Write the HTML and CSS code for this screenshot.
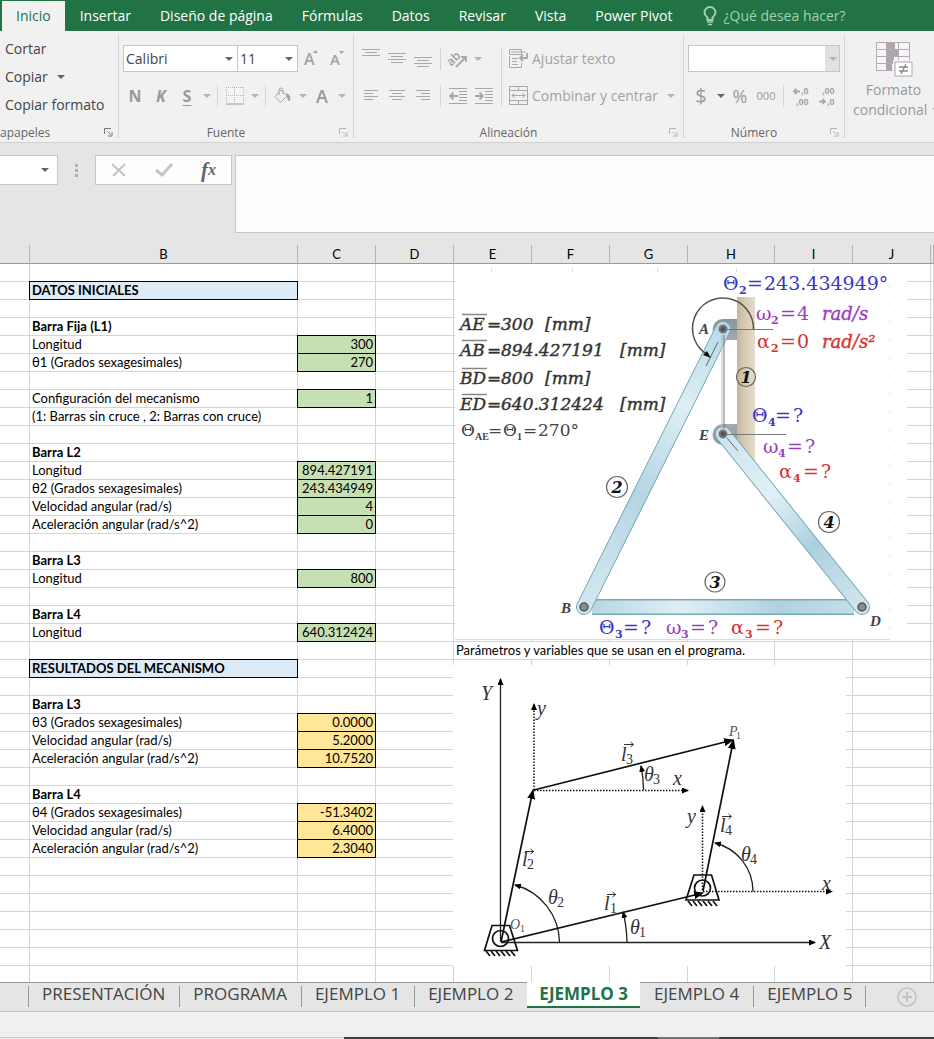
FILE: index.html
```html
<!DOCTYPE html>
<html lang="es">
<head>
<meta charset="utf-8">
<title>Mecanismo de cuatro barras</title>
<link rel="stylesheet" href="styles.css">
</head>
<body>
<nav class="menu" aria-label="Cinta">
  <button class="menu-tab menu-tab-active">Inicio</button>
  <button class="menu-tab">Insertar</button>
  <button class="menu-tab">Diseño de página</button>
  <button class="menu-tab">Fórmulas</button>
  <button class="menu-tab">Datos</button>
  <button class="menu-tab">Revisar</button>
  <button class="menu-tab">Vista</button>
  <button class="menu-tab">Power Pivot</button>
  <button class="menu-tab menu-help">
    <svg width="14" height="20" viewBox="0 0 14 20" fill="none" stroke="#a3cfb3" stroke-width="2"><path d="M4.500 14v-2.500C2.500 9.800 1.500 8.300 1.500 6.500a5.500 5.500 0 0 1 11 0c0 1.800-1 3.300-3 5V14z"/><path d="M4 16h6M5 18.500h4" stroke-width="1.500"/></svg>
    ¿Qué desea hacer?
  </button>
</nav>

<section class="ribbon">
  <div class="group group-clipboard">
    <div class="stack">
      <button class="text-btn">Cortar</button>
      <button class="text-btn">Copiar <i class="caret"></i></button>
      <button class="text-btn">Copiar formato</button>
    </div>
    <div class="group-title group-title-start">apapeles
      <svg class="launcher launcher-on" width="9" height="9" viewBox="0 0 9 9"><path d="M.5 6V.5H7M3.500 3.500l3 3M8 4v4H4" /></svg>
    </div>
  </div>
  <span class="divider"></span>

  <div class="group group-font">
    <div class="group-body">
      <div class="row">
        <label class="combo combo-font"><select aria-label="Fuente"><option>Calibri</option></select></label>
        <label class="combo combo-size"><select aria-label="Tamaño"><option>11</option></select></label>
        <button class="btn" aria-label="Aumentar tamaño"><svg width="18" height="24" viewBox="0 0 18 24"><text x="2" y="18" class="ico-letter ico-a">A</text><path d="M11 6l2.500-3L16 6z" class="ico-fill"/></svg></button>
        <button class="btn" aria-label="Reducir tamaño"><svg width="18" height="24" viewBox="0 0 18 24"><text x="2" y="18" class="ico-letter ico-a-small">A</text><path d="M11 4l2.500 3L16 4z" class="ico-fill"/></svg></button>
      </div>
      <div class="row">
        <button class="btn letter">N</button>
        <button class="btn letter letter-italic">K</button>
        <button class="btn letter letter-underline">S</button>
        <button class="drop" aria-label="Subrayado"><i class="caret caret-off"></i></button>
        <span class="vsep"></span>
        <button class="btn" aria-label="Bordes"><svg width="18" height="18" viewBox="0 0 18 18"><rect width="18" height="17" fill="#f8f2f9"/><path d="M.5 0v16M17.500 0v16M8.500 0v16M0 .5h18M0 8.500h18" fill="none" stroke="#bda9c2" stroke-dasharray="1 1"/><path d="M0 17h18" stroke="#999"/></svg></button>
        <button class="drop" aria-label="Más bordes"><i class="caret caret-off"></i></button>
        <span class="vsep"></span>
        <button class="btn" aria-label="Relleno"><svg width="18" height="18" viewBox="0 0 18 18"><path d="M7 3l6 6-6.500 6.500-5.500-6z" class="ico-line" fill="#f8f6f8"/><path d="M5 8V3a2 2 0 0 1 4 0v4" class="ico-line"/><path d="M12 6c4 1 5 4 4 8-2 0-3-2-3-5z" class="ico-fill"/></svg></button>
        <button class="drop" aria-label="Color de relleno"><i class="caret caret-off"></i></button>
        <button class="btn letter letter-color">A</button>
        <button class="drop" aria-label="Color de fuente"><i class="caret caret-off"></i></button>
      </div>
    </div>
    <div class="group-title">Fuente
      <svg class="launcher" width="9" height="9" viewBox="0 0 9 9"><path d="M.5 6V.5H7M3.500 3.500l3 3M8 4v4H4"/></svg>
    </div>
  </div>
  <span class="divider"></span>

  <div class="group group-align">
    <div class="group-body group-body-split">
      <div class="rows">
        <div class="row">
          <button class="btn" aria-label="Alinear arriba"><svg width="18" height="20" viewBox="0 0 18 20" class="ico-lines"><path d="M0 .5h18M3 3.500h12M0 6.500h18"/></svg></button>
          <button class="btn" aria-label="Alinear en medio"><svg width="18" height="20" viewBox="0 0 18 20" class="ico-lines"><path d="M0 4.500h18M3 7.500h12M0 10.500h18M3 13.500h12"/></svg></button>
          <button class="btn" aria-label="Alinear abajo"><svg width="18" height="20" viewBox="0 0 18 20" class="ico-lines"><path d="M0 8.500h18M3 11.500h12M0 14.500h18M3 17.500h12"/></svg></button>
          <span class="vsep"></span>
          <button class="btn" aria-label="Orientación"><svg width="20" height="20" viewBox="0 0 20 20"><text x="0" y="14" transform="rotate(-45 6 12)" class="ico-letter ico-ab">ab</text><path d="M8 18L18 8M13 8h5v5" class="ico-line ico-thick"/></svg></button>
          <button class="drop" aria-label="Más orientaciones"><i class="caret caret-off"></i></button>
        </div>
        <div class="row">
          <button class="btn" aria-label="Izquierda"><svg width="16" height="16" viewBox="0 0 16 16" class="ico-lines"><path d="M1 2.500h14M1 5.500h9M1 8.500h14M1 11.500h9"/></svg></button>
          <button class="btn" aria-label="Centro"><svg width="16" height="16" viewBox="0 0 16 16" class="ico-lines"><path d="M0 2.500h16M3 5.500h10M0 8.500h16M3 11.500h10"/></svg></button>
          <button class="btn" aria-label="Derecha"><svg width="16" height="16" viewBox="0 0 16 16" class="ico-lines"><path d="M1 2.500h14M6 5.500h9M1 8.500h14M6 11.500h9"/></svg></button>
          <span class="vsep"></span>
          <button class="btn" aria-label="Reducir sangría"><svg width="18" height="18" viewBox="0 0 18 18" class="ico-lines"><path d="M0 1.500h18M10 4.500h8M10 7.500h8M10 10.500h8M10 13.500h8M0 16.500h18"/><path d="M1 9h8M4.500 5.500L1 9l3.500 3.500" class="ico-thick"/></svg></button>
          <button class="btn" aria-label="Aumentar sangría"><svg width="18" height="18" viewBox="0 0 18 18" class="ico-lines"><path d="M0 1.500h18M10 4.500h8M10 7.500h8M10 10.500h8M10 13.500h8M0 16.500h18"/><path d="M0 9h8M4.500 5.500L8 9l-3.500 3.500" class="ico-thick"/></svg></button>
        </div>
      </div>
      <span class="vsep vsep-tall"></span>
      <div class="rows">
        <button class="wide-btn"><svg width="20" height="20" viewBox="0 0 20 20" class="ico-lines"><path d="M.5 .5h12v5H.5zM2 3h14.500M.5 7.500v11h12v-5M3 9.500h6M3 12.500h5M3 15.500h6M12.500 5.500v2"/><path d="M18 4v5h-7M14 6l-3 3 3 3" class="ico-thick"/></svg>Ajustar texto</button>
        <button class="wide-btn"><svg width="20" height="20" viewBox="0 0 20 20" class="ico-lines"><path d="M.5 .5h18v18H.5zM.5 4.500h18M.5 14.500h18M9.500 0v4.500M9.500 14.500v4"/><path d="M3 9.500h13M5.500 7L3 9.500 5.500 12M13.500 7L16 9.500 13.500 12"/></svg>Combinar y centrar<i class="caret caret-off caret-gap"></i></button>
      </div>
    </div>
    <div class="group-title">Alineación
      <svg class="launcher" width="9" height="9" viewBox="0 0 9 9"><path d="M.5 6V.5H7M3.500 3.500l3 3M8 4v4H4"/></svg>
    </div>
  </div>
  <span class="divider"></span>

  <div class="group group-number">
    <div class="group-body">
      <div class="row">
        <label class="combo combo-number"><select aria-label="Formato de número"><option></option></select></label>
      </div>
      <div class="row">
        <button class="btn symbol symbol-bold">$</button>
        <button class="drop" aria-label="Moneda"><i class="caret"></i></button>
        <button class="btn symbol">%</button>
        <button class="btn symbol symbol-small">000</button>
        <span class="vsep"></span>
        <button class="btn" aria-label="Aumentar decimales"><svg width="18" height="24" viewBox="0 0 18 24"><path d="M8 7.500H2M4.500 5L2 7.500 4.500 10" class="ico-line ico-thick"/><text x="9" y="10" class="ico-letter ico-dec">,0</text><text x="4" y="21" class="ico-letter ico-dec">,00</text></svg></button>
        <button class="btn" aria-label="Disminuir decimales"><svg width="18" height="24" viewBox="0 0 18 24"><text x="4" y="10" class="ico-letter ico-dec">,00</text><path d="M1 17.500h6M4.500 15L7 17.500 4.500 20" class="ico-line ico-thick"/><text x="9" y="21" class="ico-letter ico-dec">,0</text></svg></button>
      </div>
    </div>
    <div class="group-title">Número
      <svg class="launcher" width="9" height="9" viewBox="0 0 9 9"><path d="M.5 6V.5H7M3.500 3.500l3 3M8 4v4H4"/></svg>
    </div>
  </div>
  <span class="divider"></span>

  <button class="format-btn">
    <svg width="38" height="36" viewBox="0 0 38 36"><rect x=".5" y=".5" width="33" height="28" fill="#f9f4f9"/><path d="M11 1h8v7h4v7h-5v7h-2v6h-5z" fill="#aaa6aa"/><path d="M.5 .5h33v28H.5zM.5 7.500h33M.5 14.500h33M.5 21.500h33M10.500 .5v28M22.500 .5v28" fill="none" stroke="#b5a9b5"/><rect x="17" y="18" width="21" height="17" fill="#f1f1f1"/><rect x="19" y="20" width="17" height="14" fill="#fff" stroke="#b0a6b0"/><path d="M23 25h9M23 29h9M30 22l-5 10" stroke="#8a8a8a" stroke-width="1.300"/></svg>
    <span>Formato</span>
    <span class="format-line">condicional <i class="caret caret-off"></i></span>
  </button>
</section>

<section class="formula">
  <label class="combo combo-name"><select aria-label="Cuadro de nombres"><option></option></select></label>
  <span class="grip"><i></i><i></i><i></i></span>
  <div class="formula-btns">
    <button aria-label="Cancelar"><svg width="18" height="16" viewBox="0 0 18 16"><path d="M2 2l13 12M15 2L3 14" fill="none" stroke="#c4c4c4" stroke-width="2"/></svg></button>
    <button aria-label="Introducir"><svg width="18" height="16" viewBox="0 0 18 16"><path d="M1 8l6 5L17 2" fill="none" stroke="#c4c4c4" stroke-width="3"/></svg></button>
    <button class="fx">f<sub>x</sub></button>
  </div>
  <textarea class="formula-input" aria-label="Barra de fórmulas"></textarea>
</section>

<main class="sheet">
<table class="grid">
<colgroup><col class="col-a"><col class="col-b"><col class="col-m"><col class="col-m"><col class="col-m"><col class="col-m"><col class="col-m"><col class="col-h"><col class="col-m"><col class="col-m"><col></colgroup>
<thead><tr><th><th>B<th>C<th>D<th>E<th>F<th>G<th>H<th>I<th>J<th></tr></thead>
<tbody>
<tr><td><td><td><td><td><td><td><td><td><td><td>
<tr><td><td class="head">DATOS INICIALES<td><td><td><td><td><td><td><td><td>
<tr><td><td><td><td><td><td><td><td><td><td><td>
<tr><td><td class="bold">Barra Fija (L1)<td><td><td><td><td><td><td><td><td>
<tr><td><td>Longitud<td class="in">300<td><td><td><td><td><td><td><td>
<tr><td><td>θ1 (Grados sexagesimales)<td class="in">270<td><td><td><td><td><td><td><td>
<tr><td><td><td><td><td><td><td><td><td><td><td>
<tr><td><td>Configuración del mecanismo<td class="in">1<td><td><td><td><td><td><td><td>
<tr><td><td>(1: Barras sin cruce , 2: Barras con cruce)<td><td><td><td><td><td><td><td><td>
<tr><td><td><td><td><td><td><td><td><td><td><td>
<tr><td><td class="bold">Barra L2<td><td><td><td><td><td><td><td><td>
<tr><td><td>Longitud<td class="in">894.427191<td><td><td><td><td><td><td><td>
<tr><td><td>θ2 (Grados sexagesimales)<td class="in">243.434949<td><td><td><td><td><td><td><td>
<tr><td><td>Velocidad angular (rad/s)<td class="in">4<td><td><td><td><td><td><td><td>
<tr><td><td>Aceleración angular (rad/s^2)<td class="in">0<td><td><td><td><td><td><td><td>
<tr><td><td><td><td><td><td><td><td><td><td><td>
<tr><td><td class="bold">Barra L3<td><td><td><td><td><td><td><td><td>
<tr><td><td>Longitud<td class="in">800<td><td><td><td><td><td><td><td>
<tr><td><td><td><td><td><td><td><td><td><td><td>
<tr><td><td class="bold">Barra L4<td><td><td><td><td><td><td><td><td>
<tr><td><td>Longitud<td class="in">640.312424<td><td><td><td><td><td><td><td>
<tr><td><td><td><td><td colspan="4">Parámetros y variables que se usan en el programa.<td><td><td>
<tr><td><td class="head">RESULTADOS DEL MECANISMO<td><td><td><td><td><td><td><td><td>
<tr><td><td><td><td><td><td><td><td><td><td><td>
<tr><td><td class="bold">Barra L3<td><td><td><td><td><td><td><td><td>
<tr><td><td>θ3 (Grados sexagesimales)<td class="out">0.0000<td><td><td><td><td><td><td><td>
<tr><td><td>Velocidad angular (rad/s)<td class="out">5.2000<td><td><td><td><td><td><td><td>
<tr><td><td>Aceleración angular (rad/s^2)<td class="out">10.7520<td><td><td><td><td><td><td><td>
<tr><td><td><td><td><td><td><td><td><td><td><td>
<tr><td><td class="bold">Barra L4<td><td><td><td><td><td><td><td><td>
<tr><td><td>θ4 (Grados sexagesimales)<td class="out">-51.3402<td><td><td><td><td><td><td><td>
<tr><td><td>Velocidad angular (rad/s)<td class="out">6.4000<td><td><td><td><td><td><td><td>
<tr><td><td>Aceleración angular (rad/s^2)<td class="out">2.3040<td><td><td><td><td><td><td><td>
<tr><td><td><td><td><td><td><td><td><td><td><td>
<tr><td><td><td><td><td><td><td><td><td><td><td>
<tr><td><td><td><td><td><td><td><td><td><td><td>
<tr><td><td><td><td><td><td><td><td><td><td><td>
<tr><td><td><td><td><td><td><td><td><td><td><td>
<tr><td><td><td><td><td><td><td><td><td><td><td>
<tr><td><td><td><td><td><td><td><td><td><td><td>
</tbody>
</table>

<svg class="picture picture-linkage" width="452" height="376" viewBox="455 264 452 376">
  <defs>
    <linearGradient id="bar2" gradientUnits="userSpaceOnUse" x1="723" y1="329" x2="584" y2="607"><stop offset="0" stop-color="#b9dbe8"/><stop offset=".28" stop-color="#dfeef5"/><stop offset=".6" stop-color="#b5d5e3"/><stop offset=".85" stop-color="#cbe2ec"/><stop offset="1" stop-color="#d3e6ef"/></linearGradient>
    <linearGradient id="bar3" gradientUnits="userSpaceOnUse" x1="584" y1="0" x2="862" y2="0"><stop offset="0" stop-color="#b4d5e2"/><stop offset=".35" stop-color="#dfeef4"/><stop offset=".7" stop-color="#b0d2e0"/><stop offset="1" stop-color="#c4dee8"/></linearGradient>
    <linearGradient id="bar4" gradientUnits="userSpaceOnUse" x1="723" y1="434" x2="862" y2="607"><stop offset="0" stop-color="#cbe4ee"/><stop offset=".35" stop-color="#e2f0f6"/><stop offset=".65" stop-color="#add0de"/><stop offset="1" stop-color="#d3e6ee"/></linearGradient>
    <linearGradient id="wall" x1="0" x2="1" y1="0" y2="0"><stop offset="0" stop-color="#c3b699"/><stop offset=".35" stop-color="#d3c8b0"/><stop offset="1" stop-color="#e4dccb"/></linearGradient>
    <linearGradient id="steel" x1="0" x2="0" y1="0" y2="1"><stop offset="0" stop-color="#8d9498"/><stop offset=".5" stop-color="#ccd0d3"/><stop offset="1" stop-color="#8f9699"/></linearGradient>
  </defs>
  <rect x="455" y="264" width="452" height="376" fill="#fff"/>
  <path d="M455 639.500h435" stroke="#ddd"/>
  <path d="M491.500 268v4M572.500 268v4M657.500 268v4M736.500 268v4M813.500 268v4" stroke="#e2dfe2"/>
  <path d="M889.500 285v345" stroke="#ddd" stroke-dasharray="2 16"/>
  <path d="M737 297h18v168l-18-18z" fill="url(#wall)"/>
  <path d="M737 319h-14a10.500 10.500 0 0 0 0 21h14zM737 424h-14a10.500 10.500 0 0 0 0 21h14z" fill="url(#steel)"/>
  <path d="M592 607H854" stroke="#74a9b8" stroke-width="16"/>
  <path d="M592 607H854" stroke="url(#bar3)" stroke-width="13"/>
  <g fill="none" stroke-linecap="round">
    <path d="M723 329L584 607" stroke="#74a9b8" stroke-width="16"/>
    <path d="M723 329L584 607" stroke="url(#bar2)" stroke-width="14"/>
    <path d="M723 434L862 607" stroke="#74a9b8" stroke-width="16"/>
    <path d="M723 434L862 607" stroke="url(#bar4)" stroke-width="14"/>
  </g>
  <g fill="none" stroke="#777">
    <path d="M725 329.500h48M725 434.500h61M724 335v94" />
    <path d="M722 335v94" stroke="#bbb"/>
    <path d="M718 342l-12 24M727 438l11 13" stroke="#666"/>
    <path d="M753.500 329A30.500 30.500 0 1 0 708 355" stroke="#555" stroke-width="1.500"/>
  </g>
  <path d="M711 358l-8-3 4-4z" fill="#111"/>
  <g stroke="#777" fill="#555" stroke-width="2">
    <circle cx="723" cy="329" r="3.500"/><circle cx="723" cy="434" r="3.500"/>
  </g>
  <g stroke="#555" fill="#8b8b92" stroke-width="1.500">
    <circle cx="584" cy="607" r="4"/><circle cx="862" cy="607" r="4"/>
  </g>
  <g class="node">
    <text x="699" y="334">A</text><text x="699" y="440">E</text><text x="561" y="613">B</text><text x="870" y="626">D</text>
  </g>
  <g fill="none" stroke="#666" stroke-width="1.200">
    <circle cx="746" cy="377" r="9.500"/><circle cx="617" cy="487" r="10.500"/><circle cx="715" cy="582" r="10"/><circle cx="829" cy="522" r="10.500"/>
  </g>
  <g class="badge">
    <text x="746" y="383">1</text><text x="617" y="493">2</text><text x="715" y="588">3</text><text x="829" y="528">4</text>
  </g>
  <path d="M462 314.500h25M462 340.500h25M462 368.500h25M462 394.500h25" stroke="#888" stroke-width="1.500"/>
  <g class="data">
    <text x="460" y="330">AE</text><text x="487" y="330">=</text><text x="501" y="330">300</text><text x="545" y="330">[mm]</text>
    <text x="460" y="356">AB</text><text x="487" y="356">=</text><text x="501" y="356">894.427191</text><text x="620" y="356">[mm]</text>
    <text x="460" y="384">BD</text><text x="487" y="384">=</text><text x="501" y="384">800</text><text x="545" y="384">[mm]</text>
    <text x="460" y="410">ED</text><text x="487" y="410">=</text><text x="501" y="410">640.312424</text><text x="620" y="410">[mm]</text>
  </g>
  <g class="angle">
    <text x="461" y="436">Θ</text><text x="475" y="440" class="sub sub-small">AE</text><text x="488" y="436">=</text><text x="503" y="436">Θ</text><text x="517" y="440" class="sub sub-small">1</text><text x="523" y="436">=</text><text x="538" y="436">270°</text>
  </g>
  <g class="eq blue">
    <text x="723" y="290">Θ</text><text x="739" y="294" class="sub">2</text><text x="747" y="290">=</text><text x="764" y="290">243.434949°</text>
    <text x="752" y="422">Θ</text><text x="768" y="426" class="sub">4</text><text x="775" y="422">=</text><text x="793" y="422">?</text>
    <text x="599" y="634">Θ</text><text x="615" y="638" class="sub">3</text><text x="623" y="634">=</text><text x="641" y="634">?</text>
  </g>
  <g class="eq purple">
    <text x="756" y="320">ω</text><text x="771" y="324" class="sub">2</text><text x="780" y="320">=</text><text x="797" y="320">4</text><text x="822" y="320" class="unit">rad/s</text>
    <text x="763" y="453">ω</text><text x="778" y="457" class="sub">4</text><text x="787" y="453">=</text><text x="805" y="453">?</text>
    <text x="666" y="634">ω</text><text x="681" y="638" class="sub">3</text><text x="690" y="634">=</text><text x="708" y="634">?</text>
  </g>
  <g class="eq red">
    <text x="757" y="348">α</text><text x="771" y="352" class="sub">2</text><text x="780" y="348">=</text><text x="797" y="348">0</text><text x="822" y="348" class="unit">rad/s²</text>
    <text x="779" y="478">α</text><text x="793" y="482" class="sub">4</text><text x="803" y="478">=</text><text x="821" y="478">?</text>
    <text x="731" y="634">α</text><text x="745" y="638" class="sub">3</text><text x="755" y="634">=</text><text x="773" y="634">?</text>
  </g>
</svg>

<svg class="picture picture-vectors" width="393" height="300" viewBox="453 665 393 300">
  <defs>
    <marker id="tip" viewBox="0 0 10 8" refX="9" refY="4" markerWidth="10" markerHeight="8" markerUnits="userSpaceOnUse" orient="auto"><path d="M0 0l10 4-10 4z"/></marker>
    <marker id="tip-small" viewBox="0 0 7 6" refX="6" refY="3" markerWidth="7" markerHeight="6" markerUnits="userSpaceOnUse" orient="auto"><path d="M0 0l7 3-7 3z"/></marker>
  </defs>
  <rect x="453" y="665" width="393" height="301" fill="#fff"/>
  <g fill="none" stroke="#222" stroke-width="1.300">
    <path d="M500.500 942V679" marker-end="url(#tip-small)"/>
    <path d="M501 942.500H815" marker-end="url(#tip-small)"/>
    <path d="M559.500 942A60 60 0 0 0 515 885" marker-end="url(#tip-small)"/>
    <path d="M627 942Q626.500 925 623 912" marker-end="url(#tip-small)"/>
    <path d="M643.500 790Q643.500 778 641 766" marker-end="url(#tip-small)"/>
    <path d="M753 891.500A50 50 0 0 0 715 843" marker-end="url(#tip-small)"/>
  </g>
  <g fill="none" stroke="#111" stroke-width="1.500" stroke-dasharray="1.500 1.500">
    <path d="M534 790V704" marker-end="url(#tip-small)"/>
    <path d="M534 790.500H688" marker-end="url(#tip-small)"/>
    <path d="M702.500 890V806" marker-end="url(#tip-small)"/>
    <path d="M703 891.500H832" marker-end="url(#tip-small)"/>
  </g>
  <g fill="none" stroke="#111" stroke-width="1.700">
    <path d="M501 942L533 790" marker-end="url(#tip)"/>
    <path d="M534 790L733 740" marker-end="url(#tip)"/>
    <path d="M501 942L703 893" marker-end="url(#tip)"/>
    <path d="M703 891L733.500 740" marker-end="url(#tip)"/>
    <path d="M492 925.500h17.500l8 25h-33zM694 875h17.500l7.500 25h-33z"/>
    <circle cx="500.500" cy="938.500" r="8"/><circle cx="702.500" cy="888" r="8"/>
    <path d="M486 951l4 5M491 951l4 5M496 951l4 5M501 951l4 5M506 951l4 5M511 951l4 5M688 901l4 5M693 901l4 5M698 901l4 5M703 901l4 5M708 901l4 5M713 901l4 5"/>
  </g>
  <g fill="none" stroke="#333">
    <path d="M624 744.500h9M630.500 742l3 2.500-3 2.500M525 851.500h9M530.500 849l3 2.500-3 2.500M607 894.500h9M612.500 892l3 2.500-3 2.500M722 816.500h9M728.500 814l3 2.500-3 2.500"/>
  </g>
  <g class="math">
    <text x="481" y="700">Y</text><text x="819" y="949">X</text>
    <text x="537" y="715">y</text><text x="673" y="785">x</text><text x="687" y="823">y</text><text x="822" y="890">x</text>
    <text x="621" y="761">l</text><text x="626" y="764" class="idx">3</text>
    <text x="522" y="866">l</text><text x="527" y="869" class="idx">2</text>
    <text x="604" y="910">l</text><text x="610" y="913" class="idx">1</text>
    <text x="720" y="832">l</text><text x="725" y="835" class="idx">4</text>
    <text x="644" y="781">θ</text><text x="653" y="784" class="idx">3</text>
    <text x="548" y="904">θ</text><text x="557" y="907" class="idx">2</text>
    <text x="630" y="934">θ</text><text x="639" y="937" class="idx">1</text>
    <text x="741" y="861">θ</text><text x="750" y="864" class="idx">4</text>
  </g>
  <g class="point">
    <text x="510" y="929">O</text><text x="520" y="932" class="point-idx">1</text>
    <text x="729" y="736">P</text><text x="736" y="739" class="point-idx">1</text>
  </g>
</svg>
</main>

<footer class="tabs">
  <button class="sheet-tab">PRESENTACIÓN</button>
  <button class="sheet-tab">PROGRAMA</button>
  <button class="sheet-tab">EJEMPLO 1</button>
  <button class="sheet-tab">EJEMPLO 2</button>
  <button class="sheet-tab sheet-tab-active">EJEMPLO 3</button>
  <button class="sheet-tab">EJEMPLO 4</button>
  <button class="sheet-tab">EJEMPLO 5</button>
  <button class="add" aria-label="Hoja nueva"><svg width="20" height="20" viewBox="0 0 20 20" fill="none" stroke="#c2c2c2"><circle cx="10" cy="10" r="9" stroke-width="1.500"/><path d="M10 5v10M5 10h10" stroke-width="2"/></svg></button>
</footer>
<div class="status"></div>
<div class="edge"><i class="edge-light"></i><i></i><i class="edge-mid"></i><i></i></div>
</body>
</html>
```
FILE: styles.css
```css
* { box-sizing: border-box; }
body {
  margin: 0;
  height: 100vh;
  display: flex;
  flex-direction: column;
  overflow: hidden;
  background: #e5e5e5;
  color: #444;
  font: 14px/20px "Open Sans", "Noto Sans", sans-serif;
}
button {
  margin: 0;
  padding: 0;
  border: 0;
  background: none;
  color: inherit;
  font: inherit;
  white-space: nowrap;
}
svg { flex: none; display: block; overflow: visible; }

/* Menu */
.menu { display: flex; height: 31px; flex: none; padding: 1px 0 0 2px; background: #217346; color: #fff; }
.menu-tab { padding: 0 15px 0 14px; }
.menu-tab-active { margin-right: 1px; padding: 0 14px; background: #f1f1f1; color: #217346; }
.menu-help { display: flex; align-items: center; gap: 6px; padding-left: 16px; color: #a3cfb3; }

/* Ribbon */
.ribbon { display: flex; flex: none; background: #f1f1f1; border-bottom: 1px solid #d2d2d2; }
.group { display: flex; flex-direction: column; flex: none; }
.group-clipboard { width: 118px; }
.group-font { width: 234px; }
.group-align { width: 329px; }
.group-number { width: 160px; }
.divider { width: 1px; margin: 4px 0; background: #d4d4d4; }
.group-body { display: flex; flex-direction: column; gap: 10px; padding: 14px 3px; }
.group-align .group-body, .group-number .group-body { padding-left: 4px; }
.group-body-split { flex-direction: row; gap: 0; }
.rows { display: flex; flex-direction: column; gap: 10px; }
.row { display: flex; align-items: center; height: 27px; }
.group-title {
  display: flex;
  justify-content: center;
  position: relative;
  margin-top: auto;
  padding: 1px 20px 0 0;
  font-size: 12px;
  line-height: 18px;
  color: #666;
}
.group-title-start { justify-content: flex-start; }
.launcher { position: absolute; right: 5px; top: 5px; fill: none; stroke: #b4b4b4; }
.launcher-on { stroke: #777; }

.stack { display: flex; flex-direction: column; padding: 4px 0 0 5px; }
.text-btn { display: flex; align-items: center; gap: 9px; height: 28px; }

.caret { width: 0; height: 0; border: 4px solid transparent; border-top-color: #666; border-bottom: 0; }
.caret-off { border-top-color: #b4b4b4; }
.caret-gap { margin-left: 6px; }
.btn { width: 26px; height: 26px; display: flex; align-items: center; justify-content: center; }
.drop { width: 13px; height: 26px; display: flex; align-items: center; justify-content: center; }
.vsep { width: 1px; height: 22px; margin: 0 4px; background: #d4d4d4; }
.vsep-tall { height: 58px; margin-top: 3px; }

.combo { position: relative; display: block; flex: none; height: 27px; background: #fff; border: 1px solid #c6c6c6; }
.combo::after {
  content: "";
  position: absolute;
  right: 4px;
  top: 50%;
  margin-top: -2px;
  border: 4px solid transparent;
  border-top-color: #666;
  border-bottom: 0;
  pointer-events: none;
}
.combo select {
  width: 100%;
  height: 100%;
  padding: 0 2px;
  border: 0;
  appearance: none;
  background: none;
  color: #444;
  font: inherit;
}
.combo-font { width: 115px; margin-left: 1px; }
.combo-size { width: 60px; border-left: 0; }
.combo-number { width: 152px; border-right: 15px solid #e1e1e1; outline: 1px solid #c6c6c6; outline-offset: -1px; }
.combo-number::after { right: -12px; border-top-color: #b4b4b4; }

.letter { font-size: 16px; font-weight: 700; color: #999; }
.letter-italic { font-style: italic; }
.letter-underline { text-decoration: underline; text-underline-offset: 3px; }
.letter-color { font-size: 18px; font-weight: 600; }
.symbol { font-size: 18px; color: #999; }
.symbol-bold { font-size: 20px; }
.symbol-small { font-size: 11px; }
.ico-letter { fill: #a2a2a2; font-family: "Open Sans", sans-serif; font-weight: 600; }
.ico-a { font-size: 16px; }
.ico-a-small { font-size: 15px; }
.ico-ab { font-size: 12px; }
.ico-dec { font: 700 9px "Liberation Sans", sans-serif; }
.ico-fill { fill: #a2a2a2; }
.ico-line { stroke: #a8a8a8; fill: none; }
.ico-lines { stroke: #aaa6aa; fill: none; }
.ico-thick { stroke-width: 1.800; }
.wide-btn { display: flex; align-items: center; gap: 3px; height: 27px; padding-left: 3px; color: #a2a2a2; }
.format-btn {
  flex: 1 0 0;
  min-width: 0;
  display: flex;
  flex-direction: column;
  align-items: center;
  padding-top: 11px;
  color: #999;
  overflow: hidden;
}
.format-btn svg { margin: 0 0 2px 10px; }
.format-btn span { padding-left: 8px; }
.format-line { display: flex; align-items: center; gap: 5px; align-self: flex-start; }

/* Formula bar */
.formula { display: flex; align-items: flex-start; flex: none; padding: 12px 0; }
.combo-name { width: 59px; height: 30px; margin-left: -1px; }
.combo-name::after { right: 8px; }
.grip { display: flex; flex-direction: column; gap: 2px; width: 37px; height: 30px; align-items: center; justify-content: center; }
.grip i { width: 3px; height: 3px; background: #b0b0b0; }
.formula-btns { display: flex; width: 137px; height: 30px; background: #fdfdfd; border: 1px solid #c6c6c6; }
.formula-btns button { flex: 1; display: flex; align-items: center; justify-content: center; }
.formula-btns .fx { font: italic 700 21px/26px "Liberation Serif", serif; color: #666; }
.fx sub { font-size: 16px; line-height: 20px; vertical-align: baseline; }
.formula-input { flex: 1; height: 78px; margin-left: 3px; background: #fdfdfd; border: 1px solid #c6c6c6; border-right: 0; resize: none; }

/* Sheet */
.sheet { position: relative; flex: 1 1 0; min-height: 0; overflow: hidden; }
.grid { width: 100%; table-layout: fixed; border-collapse: separate; border-spacing: 0; background: #fff; color: #000; font: 13px/16px Lato, "Open Sans", sans-serif; }
.col-a { width: 30px; }
.col-b { width: 268px; }
.col-m { width: 78px; }
.col-h { width: 87px; }
th {
  height: 19px;
  padding: 0;
  font-weight: 400;
  background: #e5e5e5;
  border-right: 1px solid #b4b4b4;
  border-bottom: 1px solid #999;
}
td {
  height: 18px;
  padding: 0 2px 1px;
  border-right: 1px solid #d4d4d4;
  border-bottom: 1px solid #d4d4d4;
  white-space: nowrap;
}
.bold, .head { font-weight: 700; }
.head, .in, .out { border-color: #000; box-shadow: -1px -1px 0 #000, 0 -1px 0 #000, -1px 0 0 #000; }
.head { background: #ddebf7; }
.in, .out { text-align: right; }
.in { background: #c6e0b4; }
.out { background: #ffe699; }

.picture { position: absolute; }
.picture-linkage { left: 455px; top: 19px; }
.picture-vectors { left: 453px; top: 420px; }
.node { font: italic 700 15px "Liberation Serif", serif; fill: #444; }
.badge { font: italic 700 16px "DejaVu Serif", serif; fill: #111; text-anchor: middle; }
.data { font: italic 17px "DejaVu Serif", serif; fill: #333; stroke: #333; stroke-width: .4; }
.angle { font: 17px "DejaVu Serif", serif; fill: #444; }
.eq { font: 19px "DejaVu Serif", serif; }
.sub { font-size: 11px; font-weight: 700; }
.sub-small { font: 700 10px "Liberation Serif", serif; }
.unit { font-size: 18px; font-style: italic; stroke: currentColor; stroke-width: .4; }
.blue { fill: #3a36c4; }
.purple { fill: #983fbe; color: #983fbe; }
.red { fill: #d63333; color: #d63333; }
.math { font: italic 20px "Liberation Serif", serif; fill: #333; }
.idx { font-size: 14px; font-style: normal; }
.point { font: italic 14px "Liberation Serif", serif; fill: #555; }
.point-idx { font-size: 10px; font-style: normal; }

/* Sheet tabs */
.tabs { display: flex; flex: none; height: 30px; padding-left: 28px; background: #e5e5e5; border-top: 1px solid #999; border-bottom: 1px solid #bdbdbd; font-size: 17px; }
.sheet-tab { position: relative; height: 25px; padding: 0 14px 4px; }
.sheet-tab::before, .sheet-tab:nth-child(7)::after { content: ""; position: absolute; left: 0; top: 3px; width: 1px; height: 21px; background: #999; }
.sheet-tab:nth-child(7)::after { left: auto; right: 0; }
.sheet-tab-active { margin-top: -1px; height: 26px; padding: 0 12px 1px; background: #fff; color: #217346; font-weight: 700; border-bottom: 2px solid #217346; }
.sheet-tab-active::before, .sheet-tab-active + .sheet-tab::before { display: none; }
.add { margin: 4px 17px 0 auto; height: 20px; }
.status { flex: none; height: 25px; background: #f0f0f0; }
.edge { flex: none; display: grid; grid-template-columns: 344fr 314fr 61fr 215fr; height: 2px; }
.edge i { background: #3b4043; }
.edge .edge-light { background: #f0f0f0; border-top: 1px solid #c8c8c8; }
.edge .edge-mid { background: #707476; }
```
